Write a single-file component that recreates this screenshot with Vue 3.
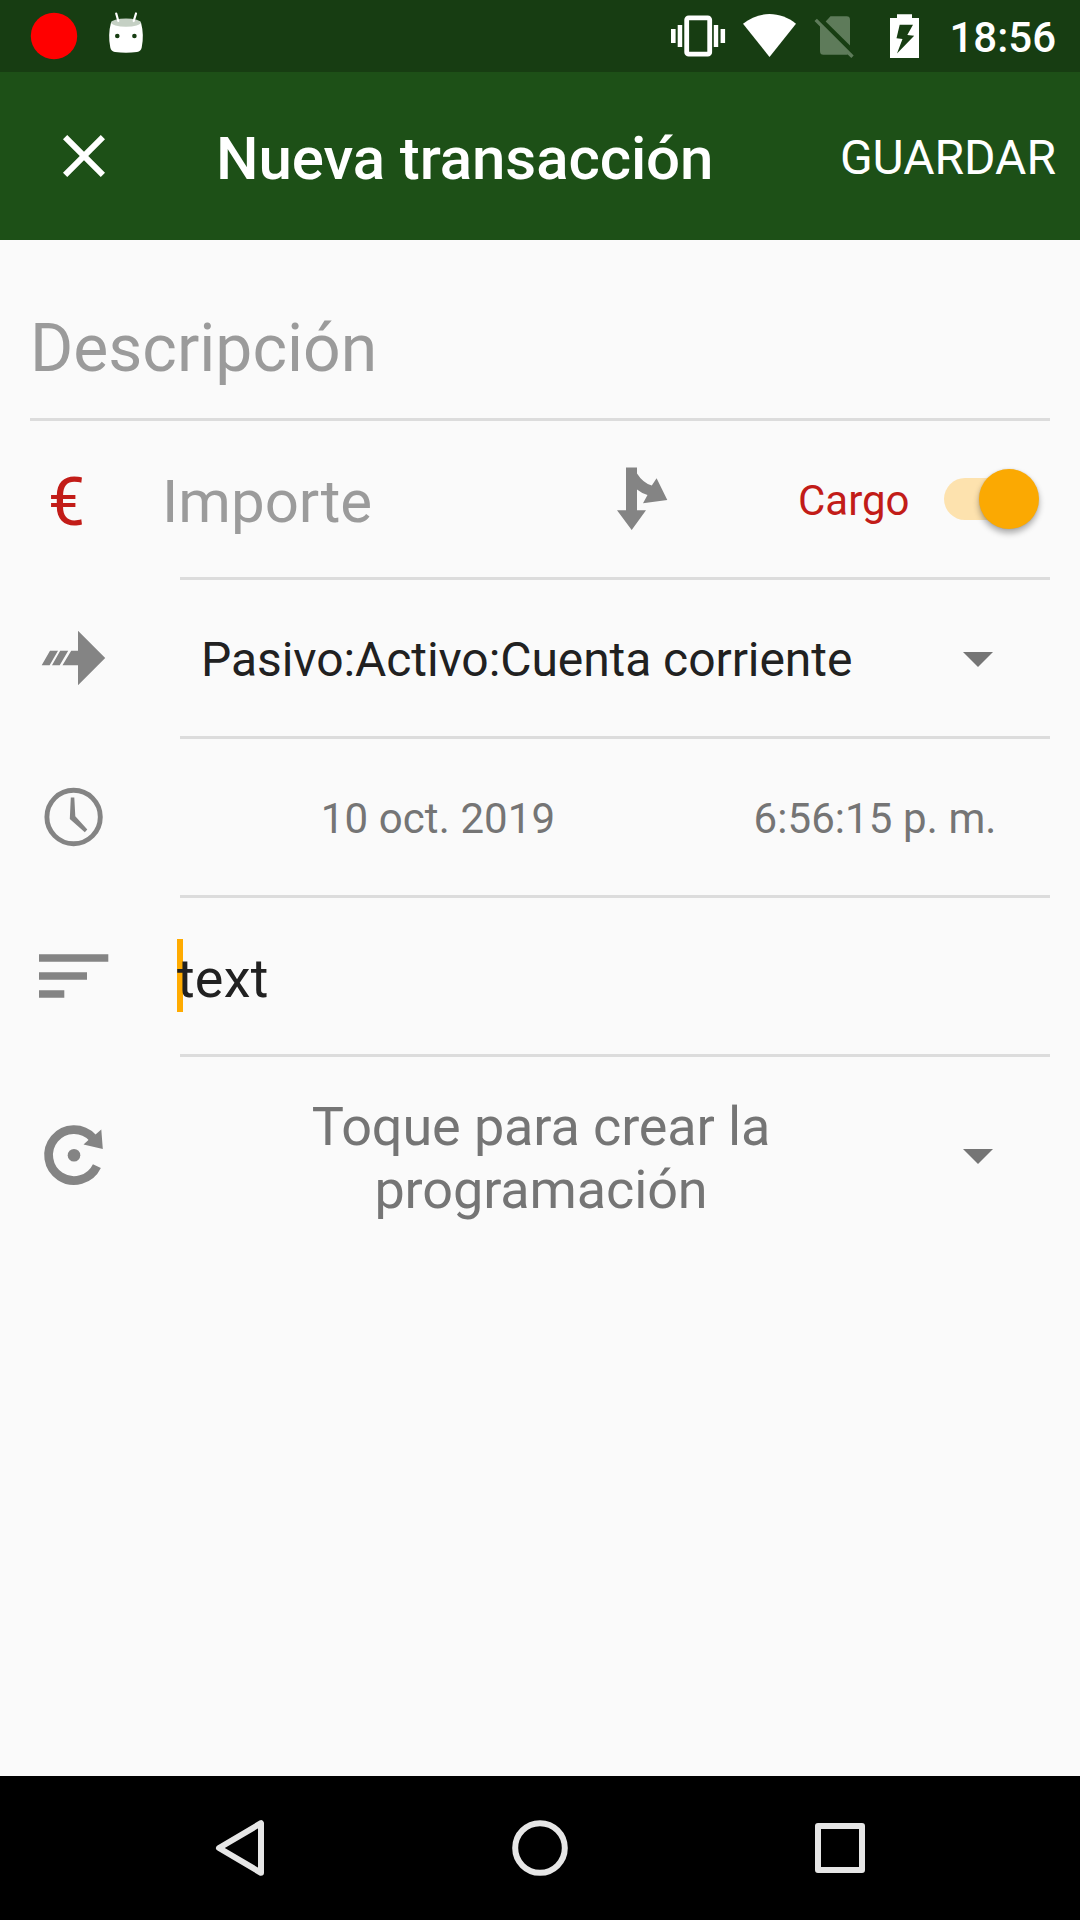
<script setup>
import { ref } from 'vue'

const transaction = ref({
  account: 'Pasivo:Activo:Cuenta corriente',
  date: '10 oct. 2019',
  time: '6:56:15 p. m.',
  notes: 'text',
})
</script>

<template>
  <div class="screen">
    <header class="status">
      <svg width="180" height="72" viewBox="0 0 180 72">
        <circle cx="54" cy="36" r="23.2" fill="#f00" />
        <path d="M111 22.5Q126 29 141 22.5Q144.3 35 141.7 47.5Q141 51.3 137 52Q126 53.6 115 52Q111 51.3 110.3 47.5Q107.7 35 111 22.5Z" fill="#fff" />
        <ellipse cx="126" cy="22.6" rx="15" ry="4.1" fill="#c5d0c4" />
        <path d="M116.2 13.5L118.3 21M136 13.5L133.7 21" stroke="#fff" stroke-width="2.2" stroke-linecap="round" />
        <circle cx="117.3" cy="36" r="2.3" fill="#173d12" />
        <circle cx="134.4" cy="36" r="2.3" fill="#173d12" />
      </svg>
      <div class="status-right">
        <svg width="72" height="72" viewBox="662 0 72 72" fill="#fff">
          <rect x="686.7" y="17.8" width="23" height="36.4" rx="2" fill="none" stroke="#fff" stroke-width="4.8" />
          <path d="M677.7 25h4.5v22h-4.5zM671 29h4.6v14H671zM713.8 25h4.4v22h-4.4zM720.6 29h4.5v14h-4.5z" />
        </svg>
        <svg width="72" height="72" viewBox="734 0 72 72" fill="#fff">
          <path d="M743 23.8C750.5 17.5 760 14 769.5 14S788.5 17.5 796 23.8L769.5 57Z" />
        </svg>
        <svg width="72" height="72" viewBox="806 0 72 72" fill="#5e7b5a">
          <path d="M825.7 21.5L830.5 16.3H846.5Q850 16.3 850 19.7V45.5Z" />
          <path d="M816.9 18.7L853.7 55.5 851.3 58 847.7 54.4Q847 54.7 846 54.7H823.5Q820 54.7 820 51.2V26.6L814.5 21.1Z" />
        </svg>
        <svg width="54" height="72" viewBox="878 0 54 72" fill="#fff" fill-rule="evenodd">
          <path d="M897 14.2H912V18H919V58H890V18H897ZM899.7 24.7L896.5 38.3 902.5 39 897 53.5 914.2 35.8 907.3 35 913 24.7Z" />
        </svg>
        <span class="clock">18:56</span>
      </div>
    </header>

    <div class="bar">
      <svg class="close" width="72" height="72" viewBox="0 0 24 24" fill="#fff">
        <path d="M19 6.41L17.59 5 12 10.59 6.41 5 5 6.41 10.59 12 5 17.59 6.41 19 12 13.41 17.59 19 19 17.59 13.41 12z" />
      </svg>
      <h1>Nueva transacción</h1>
      <span class="save">GUARDAR</span>
    </div>

    <main>
      <div class="description">Descripción</div>

      <div class="row">
        <div class="icon euro">€</div>
        <div class="field">
          <span class="amount">Importe</span>
          <svg class="split" width="60" height="72" viewBox="612 463 60 72" fill="#848484">
            <path d="M626 467.6H637V473.5Q643 483 651.8 485.6L656.6 478.2 667.3 500 643 503.3 647.5 495Q642 493.5 637 489.5V510.3H646L631.7 530 617 510.3H626Z" />
          </svg>
          <span class="type">Cargo</span>
          <div class="switch"><div class="knob"></div></div>
        </div>
      </div>

      <div class="row">
        <svg class="icon" width="180" height="120" viewBox="0 598 180 120" fill="#848484">
          <path d="M78 630.7L105.2 658 78 685.3V665.2H62.5L71.2 650.8H78ZM60.2 650.8H68.2L59.7 665.2H52ZM50 650.8H58L49.6 665.2H41.7Z" />
        </svg>
        <div class="field">
          <span class="account">{{ transaction.account }}</span>
          <svg class="drop" width="72" height="72" viewBox="0 0 24 24" fill="#757575"><path d="M7 10l5 5 5-5z" /></svg>
        </div>
      </div>

      <div class="row">
        <svg class="icon" width="180" height="120" viewBox="0 757 180 120" fill="#848484">
          <circle cx="73.6" cy="817" r="26.7" fill="none" stroke="#848484" stroke-width="4.9" />
          <path d="M70.8 797.5H74.3L75.3 816.3 87.3 829.5 84.8 832.3 69.8 819Z" />
        </svg>
        <div class="field">
          <span class="date">{{ transaction.date }}</span>
          <span class="time">{{ transaction.time }}</span>
        </div>
      </div>

      <div class="row">
        <svg class="icon" width="180" height="120" viewBox="0 916 180 120" fill="#848484">
          <path d="M39 954.2H108.3V961.7H39ZM39 972.2H87V979.8H39ZM39 990.2H64.3V997.8H39Z" />
        </svg>
        <div class="field">
          <span class="notes"><i class="caret"></i><span>{{ transaction.notes }}</span></span>
        </div>
      </div>

      <div class="row last">
        <svg class="icon" width="180" height="120" viewBox="0 1095 180 120" fill="#848484">
          <path d="M96.9 1166.1A25.4 25.4 0 1 1 92.6 1137.8" fill="none" stroke="#848484" stroke-width="8.8" />
          <path d="M101.3 1129.5L102.8 1149 83.5 1144.6 89 1139.5 95.5 1134.5Z" />
          <circle cx="74" cy="1155.2" r="6.3" />
        </svg>
        <div class="field">
          <span class="schedule">Toque para crear la programación</span>
          <svg class="drop" width="72" height="72" viewBox="0 0 24 24" fill="#757575"><path d="M7 10l5 5 5-5z" /></svg>
        </div>
      </div>
    </main>

    <nav>
      <svg width="72" height="72" viewBox="204 1812 72 72">
        <path d="M261 1823.2V1872.8L219 1848Z" />
      </svg>
      <svg width="72" height="72" viewBox="504 1812 72 72">
        <circle cx="540" cy="1848" r="24.8" />
      </svg>
      <svg width="72" height="72" viewBox="804 1812 72 72">
        <rect x="818" y="1826" width="44" height="44" />
      </svg>
    </nav>
  </div>
</template>

<style>
body {
  margin: 0;
}
</style>

<style scoped>
.screen {
  width: 1080px;
  height: 1920px;
  display: flex;
  flex-direction: column;
  overflow: hidden;
  background: #fafafa;
  color: #212121;
  font-family: Roboto, sans-serif;
  white-space: nowrap;
}
svg {
  display: block;
  flex: none;
}
.status {
  height: 72px;
  display: flex;
  justify-content: space-between;
  background: #173d12;
}
.status-right {
  display: flex;
  padding-right: 24px;
}
.clock {
  width: 124px;
  text-align: right;
  font-size: 42px;
  font-weight: 500;
  line-height: 75px;
  color: #fff;
}
.bar {
  height: 168px;
  display: flex;
  align-items: center;
  padding: 0 24px 0 48px;
  background: #1d5017;
  color: #fff;
}
h1 {
  flex: 1;
  margin: 0 0 0 96px;
  padding-top: 5px;
  font-size: 60px;
  font-weight: 500;
  line-height: 70px;
  letter-spacing: -0.08px;
}
.save {
  padding-top: 3px;
  font-size: 48px;
  line-height: 60px;
}
main {
  flex: 1;
}
.description {
  height: 109px;
  margin: 0 30px;
  padding-top: 69px;
  border-bottom: 3px solid #dcdcdc;
  font-size: 66px;
  line-height: 80px;
  color: #9b9b9b;
}
.row {
  height: 159px;
  display: flex;
  align-items: center;
}
.icon {
  flex: none;
  width: 180px;
  margin-top: -3px;
}
.euro {
  box-sizing: border-box;
  padding: 8px 0 0 48px;
  font-size: 66px;
  line-height: 80px;
  color: #c21c18;
}
.field {
  box-sizing: border-box;
  width: 870px;
  height: 100%;
  display: flex;
  align-items: center;
  border-bottom: 3px solid #dcdcdc;
}
.amount {
  width: 432px;
  margin-left: -18px;
  padding-top: 5px;
  font-size: 60px;
  color: #9b9b9b;
}
.split {
  margin-left: 18px;
}
.type {
  width: 146px;
  margin-left: 126px;
  padding-top: 3px;
  font-size: 42px;
  color: #c21c18;
}
.switch {
  width: 91px;
  height: 42px;
  display: flex;
  align-items: center;
  justify-content: flex-end;
  border-radius: 21px;
  background: #fde2ae;
}
.knob {
  flex: none;
  width: 60px;
  height: 60px;
  margin-right: -4px;
  border-radius: 50%;
  background: #fba902;
  box-shadow: 0 4px 6px rgba(0, 0, 0, 0.32), 0 0 2px rgba(0, 0, 0, 0.12);
}
.account {
  box-sizing: border-box;
  width: 762px;
  padding: 3px 0 0 21px;
  font-size: 48px;
  letter-spacing: -0.07px;
}
.date,
.time {
  flex: none;
  padding-top: 3px;
  font-size: 42px;
  letter-spacing: 0.1px;
  color: #757575;
  text-align: center;
}
.date {
  width: 516px;
}
.time {
  width: 358px;
}
.notes {
  position: relative;
  padding-top: 5px;
  margin-left: -3px;
  font-size: 54px;
  letter-spacing: 0.2px;
}
.notes span {
  position: relative;
}
.caret {
  position: absolute;
  left: 0;
  top: -3px;
  width: 6px;
  height: 73px;
  background: #ffab00;
}
.last {
  height: 196px;
}
.last .icon {
  margin-top: 0;
}
.last .field {
  border: 0;
}
.schedule {
  box-sizing: border-box;
  width: 722px;
  margin-right: 40px;
  padding: 6px 90px 0;
  font-size: 54px;
  line-height: 63px;
  letter-spacing: -0.12px;
  text-align: center;
  white-space: normal;
  color: #757575;
}
nav {
  height: 144px;
  display: flex;
  align-items: center;
  justify-content: space-between;
  box-sizing: border-box;
  padding: 0 204px;
  background: #000;
}
nav svg {
  fill: none;
  stroke: #e6e6e6;
  stroke-width: 6;
  stroke-linejoin: round;
}
</style>
